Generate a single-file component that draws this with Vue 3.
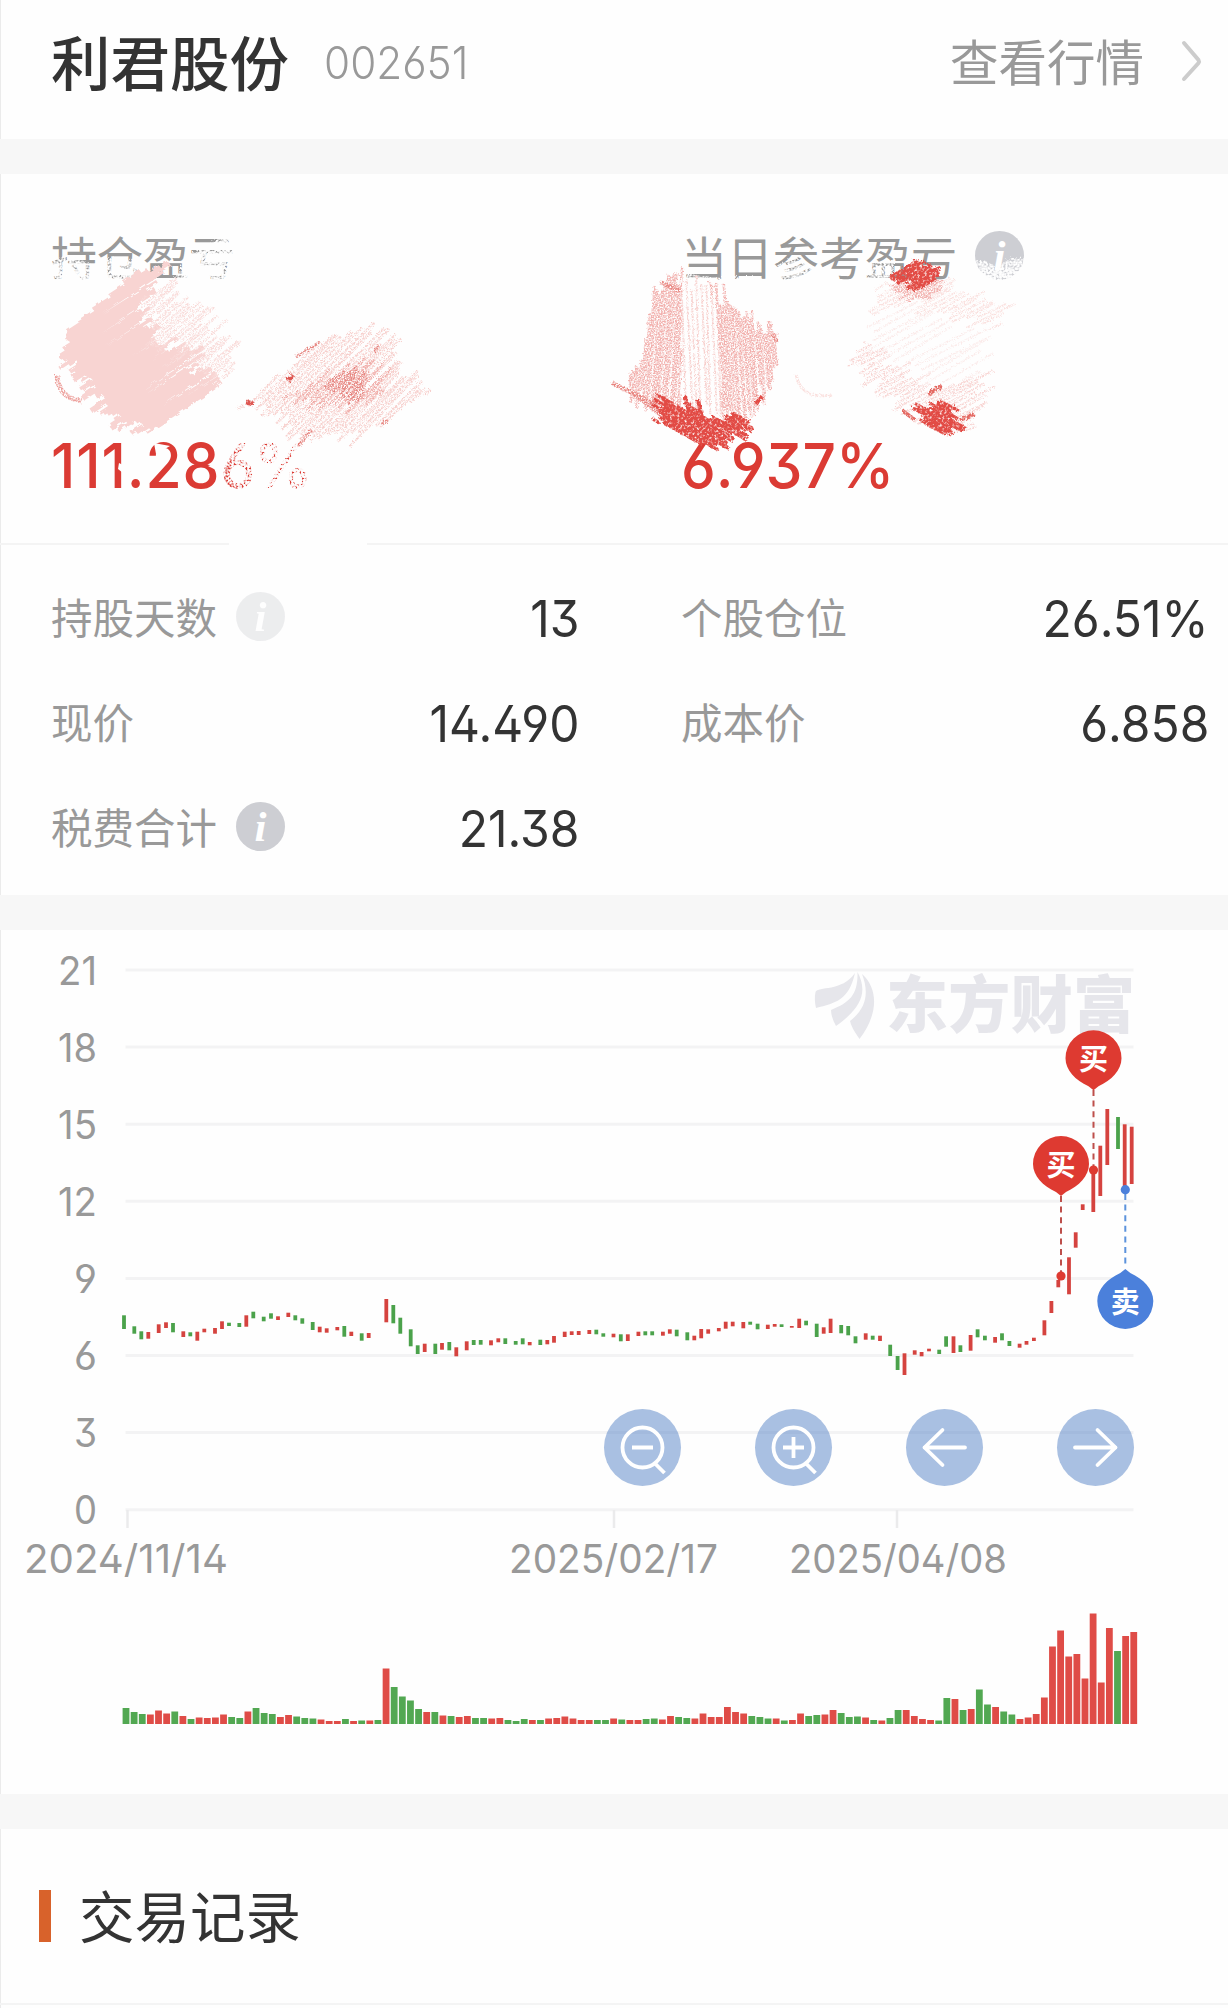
<script setup>
const RED = '#d5433f'
const GREEN = '#4ba24b'

const details = [
  { label: '持股天数', value: '13', info: true, worn: true },
  { label: '个股仓位', value: '26.51%' },
  { label: '现价', value: '14.490' },
  { label: '成本价', value: '6.858' },
  { label: '税费合计', value: '21.38', info: true }
]

const yLabels = [21, 18, 15, 12, 9, 6, 3, 0].map((v, i) => ({ v, y: 970 + i * 77.1 }))

const xLabels = [
  { text: '2024/11/14', tick: 127.5, x: 24, w: 204 },
  { text: '2025/02/17', tick: 614, x: 509, w: 209 },
  { text: '2025/04/08', tick: 897, x: 789, w: 218 }
]

// x, top, bottom, g = down / r = up
const candles = `124,1315.3,1329,g 134.3,1326.3,1333.7,g 141.3,1331.3,1339.3,g 148.3,1332,1338.7,r
158.7,1324.3,1333,r 166,1322.3,1328,r 173,1323,1332.3,g 183.3,1331.3,1337,r 190.3,1332.3,1336.3,g
197.3,1331.7,1340.7,r 204.3,1328.7,1332.3,r 215,1328,1333.7,r 222,1321.3,1329,r 229,1322.7,1326,g
239.3,1323,1327,g 246.3,1315.3,1326.7,r 253.3,1311.7,1318.3,g 263.7,1316.7,1321.3,g 271,1313.3,1318.7,g
278,1316.3,1320,r 288.3,1312.7,1317,r 295.3,1315.3,1320.3,g 302.3,1318.3,1323.7,g 312.7,1322,1330,g
319.7,1326.7,1332.3,r 326.7,1328.3,1332.7,r 337.3,1327,1330.3,r 344.3,1326,1336.7,g 351.3,1331.7,1336,r
361.7,1333.3,1340.7,g 368.7,1333,1338,r 386.3,1299,1322.3,r 393.3,1305,1323.3,g 400.3,1317.7,1333.7,g
410.7,1329.3,1346.3,g 417.7,1345.3,1354,g 424.7,1343.7,1352,r 435.3,1343.7,1354,g 442,1343,1349.7,r
449.3,1342,1350.3,g 456.3,1347.3,1356.3,r 466.7,1341.3,1350.3,r 473.7,1340,1345,g 480.7,1340,1344.7,g
491,1340.3,1345.3,r 498.3,1338.3,1342.3,r 505.3,1338.3,1344,g 515.7,1341,1344.7,g 522.7,1338.3,1344.3,g
529.7,1342,1345.3,r 540.3,1339.7,1345,g 547.3,1340,1344.3,r 554,1336,1342.7,r 564.7,1331.7,1337,r
571.7,1331.3,1335,r 578.7,1331,1335,r 589.3,1330,1334,r 596.3,1329.7,1334.3,g 603.3,1333.3,1336.7,g
613.5,1333.7,1337.3,r 620.8,1334.3,1341.3,g 627.8,1334.3,1341,r 638.4,1331.7,1336,r 645.3,1331.3,1335.3,g
652.2,1331.3,1335.3,g 662.9,1331.7,1335.7,r 669.8,1329.3,1333.7,r 676.7,1329.7,1336.3,g 687.3,1332.3,1340.3,g
694.3,1335.7,1340.3,r 701.2,1329,1338.3,r 708.2,1329.3,1333.7,r 718.8,1328,1331.3,r 725.7,1321.7,1328.7,r
732.7,1321.7,1326.3,r 743.3,1322,1328.3,r 750.2,1321.7,1324.7,g 757.6,1323.7,1329.3,g 767.8,1324.7,1329,r
774.7,1324,1326.7,r 781.6,1324.3,1327,g 791.8,1326,1327.7,r 799.2,1318.7,1328,r 806.1,1320.7,1325.3,g
816.7,1323.7,1337,g 823.7,1327.3,1333.7,r 830.6,1318.7,1333,r 841.2,1325,1333.3,g 848.2,1326,1335.3,g
855.5,1336.3,1343.3,g 865.7,1333.3,1339.7,r 872.7,1335.7,1339.7,g 880,1335.7,1341,r 890.2,1344.7,1356,g
897.6,1356,1370,g 904.5,1353.3,1375,r 914.7,1350.3,1354.7,r 921.6,1352,1356.3,r 929,1348.7,1351.3,r
939.2,1349.7,1354,g 946.1,1336.3,1346.7,g 953.5,1336.3,1353,r 960.4,1345.3,1352,g 970.6,1335,1350.7,r
977.6,1329.3,1337.3,g 984.9,1335.7,1340.3,g 995.1,1337,1342.7,r 1002,1333.3,1340.3,g 1009.4,1341,1346,g
1019.6,1343.7,1347.7,r 1026.5,1341,1344.7,r 1033.9,1337.7,1341,r 1044.4,1320.3,1335.3,r 1051.4,1301,1313,r
1058.3,1280,1287.3,r 1069,1257.3,1294.3,r 1075.7,1232.3,1247.7,r 1082.7,1204.3,1210,r 1093.3,1170,1212,r
1100.3,1145.7,1196,r 1107.3,1109,1165,r 1118,1117,1149,g 1124.7,1124.3,1187,r 1131.7,1126.7,1184,r`
  .trim().split(/\s+/).map(s => {
    const [x, top, bottom, dir] = s.split(',')
    return { x: +x, y: +top, h: bottom - top, color: dir === 'g' ? GREEN : RED }
  })

const volumes = `g16 g12 g10 r9.5 r13.5 r10.5 g12.5 r8 g5 r6.5 r6 r6.5 r9.5 g7 g6 r12.5 g16 g11 g10 r7 r9 g7.5 g6 g5.5
r4.5 r3 r3 g5 r3 g3.5 r3.5 g4 r55.5 g37 g27.5 g23.5 g15 r12 g12 r8.5 g8 r7 r8 g6 g6 r5.5 r6 g4 g3 g5 r4 g4 r5.5 r6
r7.5 r5.5 r4 r4 g4 g4 r5.5 g4.5 r4 r4 g5 g5.5 r4.5 r8 g7 g6 r5.5 r10.5 r7 r7 r17 r12 r10.5 g8 g7 g5.5 r5.5 g3.5 r4
r10.5 g8 g9 r9.5 r14 g11 g7 g7.5 r6.5 g4 r3.5 g6 g14 r14 r8 r5 r4 g3.5 g26 r25 g14 r15 g34.5 g19.5 r17 g12.5 g9.5
r5 r6.5 r10 r26.5 r77.5 r93.5 r67.5 r70 r45.5 r110.5 r41.5 r96 g73 r88 r92`
  .split(/\s+/).map((s, i) => {
    const h = +s.slice(1)
    return { x: 122.6 + i * 8.127, y: 1724 - h, h, color: s[0] === 'g' ? '#52a852' : '#df4c47' }
  })

const markers = [
  { text: '买', x: 1093.5, y: 1058.3, color: '#de3a31', from: 1090, to: 1166, dot: 1170 },
  { text: '买', x: 1061, y: 1164, color: '#de3a31', from: 1196, to: 1272, dot: 1276 },
  { text: '卖', x: 1125.3, y: 1301, color: '#4b80db', from: 1194, to: 1268, dot: 1189.7, sell: true }
]

const tools = ['zoom-out', 'zoom-in', 'left', 'right']

// small seeded generator, keeps the brush strokes stable between renders
let seed = 7
const rand = () => {
  seed = (seed * 16807) % 2147483647
  return seed / 2147483647
}

// fills a polygon with slanted brush strokes, returns one path
const hatch = (pts, deg, gap, jitter) => {
  const a = (deg * Math.PI) / 180
  const c = Math.cos(a)
  const s = Math.sin(a)
  const rot = pts.map(([x, y]) => [x * c + y * s, -x * s + y * c])
  const ys = rot.map(p => p[1])
  let d = ''
  for (let y = Math.min(...ys); y < Math.max(...ys); y += gap) {
    const hits = []
    rot.forEach((p, i) => {
      const q = rot[(i + 1) % rot.length]
      if ((p[1] <= y) !== (q[1] <= y)) hits.push(p[0] + ((y - p[1]) / (q[1] - p[1])) * (q[0] - p[0]))
    })
    hits.sort((m, n) => m - n)
    for (let i = 0; i + 1 < hits.length; i += 2) {
      const x1 = hits[i] + (rand() - 0.5) * jitter
      const x2 = hits[i + 1] + (rand() - 0.5) * jitter
      const y2 = y + (rand() - 0.5) * gap
      d += `M${(x1 * c - y * s).toFixed(1)} ${(x1 * s + y * c).toFixed(1)}L${(x2 * c - y2 * s).toFixed(1)} ${(x2 * s + y2 * c).toFixed(1)}`
    }
  }
  return d
}

const strokes = [
  { d: hatch([[62, 335], [133, 277], [166, 265], [143, 303], [155, 340], [198, 353], [195, 370], [222, 383], [147, 435], [113, 420], [90, 393], [63, 357]], -33, 2.6, 22), w: 3.4, color: '#f8d4d2', f: 'rough' },
  { d: hatch([[143, 300], [166, 284], [190, 300], [215, 320], [238, 355], [228, 378], [198, 362], [155, 340]], -42, 4, 24), w: 2.5, color: '#f9dcda', f: 'grain' },
  { d: 'M57 375Q58 398 82 401', w: 5, color: '#eda09c', f: 'grain' },
  { d: hatch([[247, 402], [290, 365], [320, 342], [367, 327], [395, 345], [428, 394], [357, 440], [303, 440]], -45, 4, 24), w: 2.5, color: '#f7cfcc', f: 'grain' },
  { d: hatch([[290, 395], [318, 378], [358, 362], [384, 370], [392, 392], [340, 412], [310, 410]], -48, 4.5, 20), w: 2.5, color: '#f0aca8', f: 'grain' },
  { d: hatch([[322, 385], [350, 370], [370, 376], [366, 400], [340, 400]], -48, 4, 16), w: 2.5, color: '#e68580', f: 'grain' },
  { d: 'M246 402l7 2M288 381l5-6', w: 5, color: '#de5751', f: 'solid' },
  { d: 'M296 357l24-15M298 446l14-16M374 352l5-6M382 424l6-4', w: 3, color: '#e68580', f: 'grain' },
  { d: hatch([[658, 282], [682, 280], [680, 408], [632, 400], [628, 380], [646, 345], [646, 320]], 94, 2.6, 26), w: 2.6, color: '#f2b0ad', f: 'grain' },
  { d: hatch([[682, 282], [708, 283], [722, 300], [724, 415], [680, 408]], 88, 5, 20), w: 2, color: '#f7cfcc', f: 'grain' },
  { d: hatch([[706, 284], [745, 309], [777, 336], [778, 370], [762, 395], [748, 418], [722, 414], [716, 300]], 86, 2.6, 26), w: 2.6, color: '#f2b0ad', f: 'grain' },
  { d: 'M612 383l44 22M632 392l38 30M660 282l20 9M773 334l4 8', w: 4.500, color: '#e8837e', f: 'grain' },
  { d: hatch([[657, 403], [664, 397], [675, 410], [690, 401], [700, 414], [716, 420], [735, 412], [750, 420], [745, 434], [725, 442], [718, 452], [700, 443], [657, 422]], 29, 2.6, 16), w: 3.4, color: '#e24b45', f: 'solid' },
  { d: 'M668 412l-5-16M688 412l-3-16M702 418l-4-18M762 396l-6 8', w: 4, color: '#e24b45', f: 'solid' },
  { d: hatch([[881, 287], [955, 281], [1005, 307], [994, 330], [950, 320], [900, 300], [872, 317]], -28, 4, 24), w: 2.2, color: '#fae0de', f: 'grain' },
  { d: hatch([[862, 345], [900, 365], [935, 385], [990, 370], [984, 400], [970, 432], [938, 432], [856, 368]], -28, 4, 24), w: 2.2, color: '#f8d4d2', f: 'grain' },
  { d: hatch([[872, 317], [900, 303], [950, 322], [992, 332], [990, 370], [935, 385], [866, 347]], -28, 7, 24), w: 2, color: '#fbebea', f: 'grain' },
  { d: hatch([[884, 287], [930, 276], [950, 281], [930, 298], [910, 300]], -24, 2.8, 12), w: 2.5, color: '#f2b0ad', f: 'grain' },
  { d: hatch([[892, 275], [914, 261], [942, 270], [936, 280], [917, 290], [909, 287], [911, 280], [893, 283]], -30, 2.2, 8), w: 3.3, color: '#e24b45', f: 'solid' },
  { d: hatch([[914, 405], [926, 407], [936, 398], [957, 407], [955, 418], [965, 430], [940, 433], [922, 422]], 28, 2.4, 12), w: 3.3, color: '#e24b45', f: 'solid' },
  { d: 'M928 394l14-8M903 411l12 9M960 420l14-6', w: 4, color: '#e46a64', f: 'solid' },
  { d: 'M796 374Q800 400 832 395', w: 3, color: '#fae0de', f: 'grain' }
]

// rubbed-out places over the labels and the first percentage
const wipes = [
  { d: 'M50 259L72 256L96 266L104 258L136 259L145 270L148 284L50 284Z', f: 'wipe' },
  { d: 'M50 268L146 272L146 284L50 284Z', f: 'wipe' },
  { d: 'M172 284L180 268L187 257L206 247L224 238L240 238L240 284Z', f: 'wipe' },
  { d: 'M196 254L222 236L240 236L240 286L176 286Z', f: 'wipe' },
  { d: 'M684 273L712 278L760 276L764 283L684 284Z', f: 'wipe' },
  { d: 'M775 266L796 258L812 266L806 283L775 283Z', f: 'wipe' },
  { d: 'M868 264L894 262L894 284L866 284Z', f: 'wipe' },
  { d: 'M970 263L984 260L996 267L1012 258L1026 259L1026 285L970 285Z', f: 'wipe' },
  { d: 'M970 270L1026 268L1026 285L970 285Z', f: 'wipe' },
  { d: 'M224 440L314 440L318 492L222 492Z', f: 'wipe' },
  { d: 'M238 440L314 440L318 492L240 492L232 478L232 456Z', f: 'wipe' },
  { d: 'M262 440L316 440L318 492L262 492Z', f: 'wipe' },
  { d: 'M119 463l8 4-4 6-5-4zM154 443l16 3-14 8zM122 442l5 3-3 7zM208 466l8-3-2 6z', f: 'none' },
  { d: 'M229 542h138v5h-138z', f: 'none' }
]
</script>

<template>
  <div class="page">
    <header class="stock-header">
      <h1 class="stock-name">利君股份</h1>
      <span class="stock-code num">002651</span>
      <a class="quote-link">
        查看行情
        <svg width="22" height="44" viewBox="0 0 22 44" fill="none" stroke="#ccc" stroke-width="4" stroke-linecap="round">
          <path d="M4 5L18.5 22Q19.5 23.500 18.500 25L4 41" />
        </svg>
      </a>
    </header>

    <section class="profit">
      <div class="profit-item">
        <div class="profit-label">持仓盈亏</div>
        <div class="profit-value num bold">111.286%</div>
      </div>
      <div class="profit-item">
        <div class="profit-label">
          当日参考盈亏
          <span class="info"><i>i</i></span>
        </div>
        <div class="profit-value num">6.937%</div>
      </div>
      <svg class="brush" width="1228" height="400" viewBox="0 174 1228 400">
        <defs>
          <filter id="rough" x="-10%" y="-10%" width="120%" height="120%">
            <feTurbulence type="fractalNoise" baseFrequency="0.12" numOctaves="3" result="n" />
            <feDisplacementMap in="SourceGraphic" in2="n" scale="6" />
          </filter>
          <filter id="solid" x="-50%" y="-50%" width="200%" height="200%">
            <feTurbulence type="fractalNoise" baseFrequency="0.4" numOctaves="2" result="n" />
            <feDisplacementMap in="SourceGraphic" in2="n" scale="5" result="g" />
            <feColorMatrix in="n" values="0 0 0 0 0  0 0 0 0 0  0 0 0 0 0  3 0 0 0 -0.500" result="m" />
            <feComposite in="g" in2="m" operator="in" />
          </filter>
          <filter id="grain" x="-50%" y="-50%" width="200%" height="200%">
            <feTurbulence type="fractalNoise" baseFrequency="0.7" numOctaves="2" result="n" />
            <feDisplacementMap in="SourceGraphic" in2="n" scale="4" result="g" />
            <feColorMatrix in="n" values="0 0 0 0 0  0 0 0 0 0  0 0 0 0 0  3 0 0 0 -0.900" result="m" />
            <feComposite in="g" in2="m" operator="in" />
          </filter>
          <filter id="wipe" x="-10%" y="-10%" width="120%" height="120%">
            <feTurbulence type="fractalNoise" baseFrequency="0.5" numOctaves="2" seed="5" result="n" />
            <feDisplacementMap in="SourceGraphic" in2="n" scale="8" result="g" />
            <feColorMatrix in="n" values="0 0 0 0 0  0 0 0 0 0  0 0 0 0 0  3 0 0 0 -0.850" result="m" />
            <feComposite in="g" in2="m" operator="in" />
          </filter>
        </defs>
        <path v-for="(w, i) in wipes" :key="'w' + i" :d="w.d" fill="#fefefe" :filter="w.f === 'none' ? null : `url(#${w.f})`" />
        <path v-for="(s, i) in strokes" :key="i" :d="s.d" fill="none" :stroke="s.color" :stroke-width="s.w" :filter="`url(#${s.f})`" />
      </svg>
    </section>

    <section class="details">
      <div v-for="item in details" :key="item.label" class="detail">
        <span class="detail-label">{{ item.label }}</span>
        <span v-if="item.info" class="info" :class="{ worn: item.worn }"><i>i</i></span>
        <span class="detail-value num">{{ item.value }}</span>
      </div>
    </section>

    <section class="chart">
      <svg width="1228" height="864" viewBox="0 930 1228 864">
        <g stroke="#f3f3f4" stroke-width="3">
          <line v-for="l in yLabels" :key="l.v" x1="125.500" x2="1133.500" :y1="l.y" :y2="l.y" />
        </g>
        <g stroke="#ebebec" stroke-width="2.5">
          <line v-for="l in xLabels" :key="l.text" :x1="l.tick" :x2="l.tick" y1="1510" y2="1528" />
        </g>
        <g class="axis-text">
          <text v-for="l in yLabels" :key="l.v" x="97" :y="l.y + 14.500" text-anchor="end" :textLength="l.v > 9 ? 39 : 23" lengthAdjust="spacingAndGlyphs">{{ l.v }}</text>
          <text v-for="l in xLabels" :key="l.text" :x="l.x" y="1572.500" :textLength="l.w" lengthAdjust="spacingAndGlyphs">{{ l.text }}</text>
        </g>

        <g fill="#e6e6eb">
          <path d="M855 973C849 1000 836 1003 816 1008Q814 999 815.500 992C818 986 842 992 855 973Z" />
          <path d="M857.500 972C867 990 864 1006 836 1026Q831 1017 831 1010C850 1002 858 995 857.500 972Z" />
          <path d="M862 974C879 989 878 1015 859.500 1039Q851 1027 850 1021C867 1008 869 992 862 974Z" />
          <text class="watermark" x="886" y="1028" textLength="249">东方财富</text>
        </g>

        <rect v-for="(c, i) in candles" :key="'c' + i" :x="c.x - 1.900" :y="c.y" width="3.800" :height="c.h" :fill="c.color" />
        <rect v-for="(v, i) in volumes" :key="'v' + i" :x="v.x" :y="v.y" width="6.800" :height="v.h" :fill="v.color" />

        <g v-for="(m, i) in markers" :key="'m' + i">
          <line :x1="m.x" :x2="m.x" :y1="m.from" :y2="m.to" :stroke="m.sell ? '#5c93dc' : '#bd4f4b'" stroke-width="2" stroke-dasharray="6 4.600" />
          <circle :cx="m.x" :cy="m.dot" r="4.600" :fill="m.color" />
          <g :transform="`translate(${m.x} ${m.y})`">
            <path :transform="m.sell ? 'rotate(180)' : null" :fill="m.color" d="M0 32L-5 28C-18 22-28 12-28 0A28 28 0 0 1 28 0C28 12 18 22 5 28Z" />
            <text class="marker-text" text-anchor="middle" y="11.500">{{ m.text }}</text>
          </g>
        </g>
      </svg>

      <div class="chart-tools">
        <button v-for="t in tools" :key="t" class="tool">
          <svg width="77" height="77" viewBox="-38.5 -38.5 77 77" fill="none" stroke="#fff" stroke-width="3.8" stroke-linecap="round" stroke-linejoin="round">
            <template v-if="t.startsWith('zoom')">
              <circle r="20" />
              <path d="M13 16.500L22 25.500M-10.500 0H10.500" stroke-linecap="butt" />
              <path v-if="t === 'zoom-in'" d="M0-10.500V10.500" stroke-linecap="butt" />
            </template>
            <path v-else :transform="t === 'right' ? 'scale(-1 1)' : null" d="M20.500 0H-20M-2-17.500L-20 0L-2 17.500" />
          </svg>
        </button>
      </div>
    </section>

    <section class="records">
      <h2>交易记录</h2>
    </section>
  </div>
</template>

<style>
body {
  background: #fefefe;
}
</style>

<style scoped>
.page {
  box-sizing: border-box;
  width: 1228px;
  height: 2008px;
  overflow: hidden;
  background: #fefefe;
  box-shadow: inset 1px 0 #ebebeb;
  color: #333;
  font-family: 'Noto Sans CJK SC', sans-serif;
}

/* digits are drawn slightly condensed */
.num {
  font-family: Inter, sans-serif;
  font-feature-settings: 'ss01';
  transform: scaleX(0.94);
  transform-origin: left center;
}

.stock-header {
  display: flex;
  align-items: center;
  box-sizing: border-box;
  height: 139px;
  padding: 0 26px 20px 51px;
}

.stock-name {
  margin: 0;
  font-size: 59.5px;
  line-height: 72px;
  font-weight: 500;
}

.stock-code {
  margin: 6px 0 0 35px;
  font-size: 45px;
  font-weight: 300;
  color: #999;
}

.quote-link {
  display: flex;
  align-items: center;
  gap: 36px;
  margin-left: auto;
  font-size: 48.5px;
  line-height: 60px;
  color: #999;
}

.profit {
  position: relative;
  display: flex;
  box-sizing: border-box;
  height: 406px;
  padding: 48px 0 0 51px;
  border-top: 35px solid #f7f7f7;
  border-bottom: 2px solid #f4f4f4;
}

.profit-item {
  width: 630px;
  flex: none;
}

.profit-label {
  display: flex;
  align-items: center;
  gap: 18px;
  height: 66px;
  font-size: 46px;
  color: #999;
}

.profit-value {
  margin-top: 139px;
  font-size: 62.5px;
  line-height: 76px;
  font-weight: 450;
  color: #db3b34;
}

.profit-value.bold {
  font-weight: 500;
  letter-spacing: 0.015em;
}

.brush {
  position: absolute;
  left: 0;
  top: 0;
}

.info {
  display: flex;
  align-items: center;
  justify-content: center;
  width: 49px;
  height: 49px;
  border-radius: 50%;
  background: #cdced3;
  color: #fff;
  font: 700 43px 'Liberation Serif', serif;
}

.worn {
  opacity: 0.35;
}

.details {
  display: grid;
  grid-template-columns: 528px 528px;
  column-gap: 102px;
  grid-auto-rows: 105px;
  box-sizing: border-box;
  height: 385px;
  padding: 21px 0 0 51px;
  border-bottom: 35px solid #f7f7f7;
}

.detail {
  display: flex;
  align-items: center;
}

.detail-label {
  padding-bottom: 5px;
  font-size: 41.5px;
  line-height: 60px;
  color: #999;
}

.detail .info {
  margin: 0 0 5px 19px;
}

.detail-value {
  margin-left: auto;
  font-size: 51px;
  transform-origin: right center;
}

.chart {
  position: relative;
  height: 864px;
}

.chart > svg {
  display: block;
}

.axis-text {
  font-family: Inter, sans-serif;
  font-feature-settings: 'ss01';
  font-size: 39px;
  fill: #999;
}

.watermark {
  font-size: 62px;
  font-weight: 900;
}

.marker-text {
  font-size: 29px;
  font-weight: 700;
  fill: #fff;
}

.chart-tools {
  position: absolute;
  left: 603.5px;
  top: 478.5px;
  display: flex;
  gap: 74px;
}

.tool {
  width: 77px;
  height: 77px;
  padding: 0;
  border: none;
  border-radius: 50%;
  background: rgba(84, 130, 198, 0.5);
}

.tool svg {
  display: block;
}

.records {
  box-sizing: border-box;
  height: 211px;
  padding: 45px 0 0 39px;
  border-top: 35px solid #f7f7f7;
  border-bottom: 2px solid #f4f4f4;
}

.records h2 {
  display: flex;
  align-items: center;
  gap: 28px;
  height: 80px;
  margin: 0;
  font-size: 55.5px;
  font-weight: 400;
}

.records h2::before {
  content: '';
  width: 12px;
  height: 52px;
  margin-top: 3px;
  background: #d8622b;
}
</style>
